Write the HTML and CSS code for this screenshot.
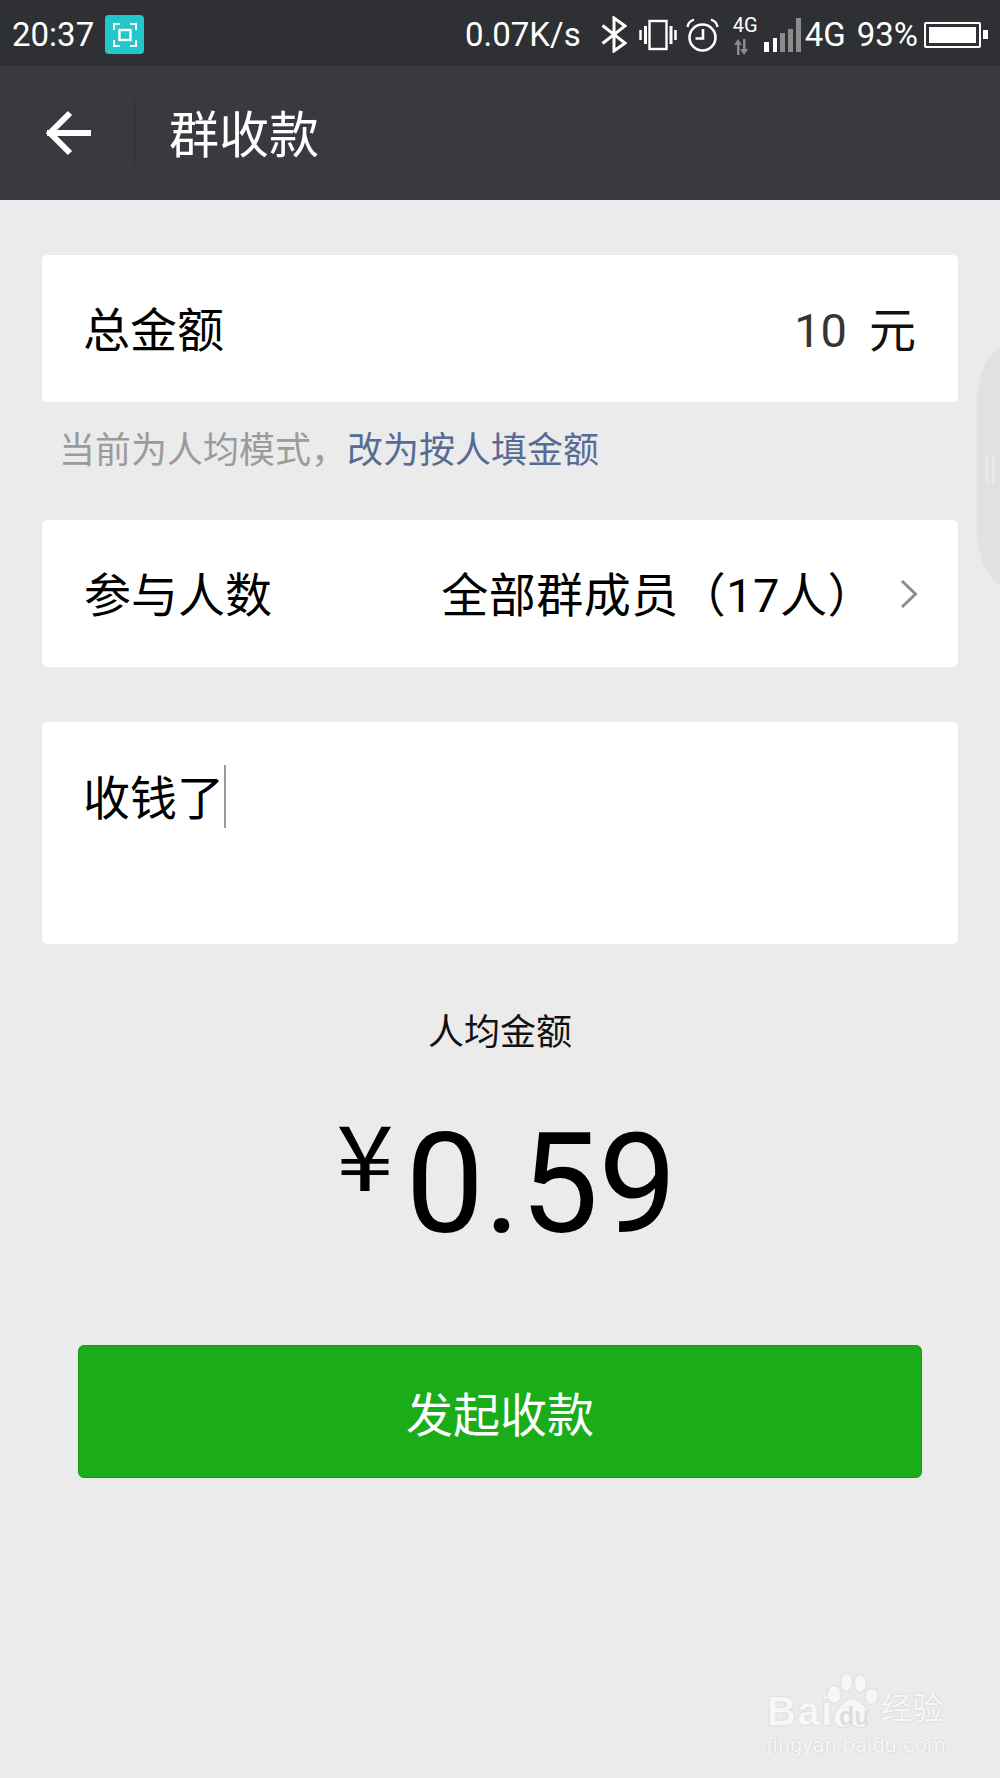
FILE: index.html
```html
<!DOCTYPE html>
<html lang="zh-CN">
<head>
  <meta charset="UTF-8">
  <meta name="viewport" content="width=device-width, initial-scale=1">
  <title>群收款</title>
  <link rel="stylesheet" href="styles.css">
</head>
<body>

  <!-- Status bar -->
  <div class="status-bar">
    <span class="time">20:37</span>
    <span class="app-badge">
      <svg width="26" height="26" viewBox="0 0 26 26" fill="none" stroke="#fff" stroke-width="2">
        <path d="M2 8V2H8M18 2H24V8M24 18V24H18M8 24H2V18"/>
        <rect x="7.5" y="8" width="11" height="10" stroke-width="2.4"/>
      </svg>
    </span>
    <span class="status-right">
      <span class="speed">0.07K/s</span>
      <svg class="ico-bt" width="26" height="37" viewBox="0 0 26 37" fill="none" stroke="#fff" stroke-width="3">
        <path d="M1.5 9.500L24 27L13 35V2L24 10L1.500 27.500"/>
      </svg>
      <svg class="ico-vib" width="38" height="32" viewBox="0 0 38 32" fill="none" stroke="#fff" stroke-width="2.400">
        <rect x="10.500" y="2" width="17" height="28"/>
        <path d="M6.500 7V25M32 7V25" stroke-width="3"/>
        <path d="M1.500 11V21M36.500 11V21" stroke-width="2.500"/>
      </svg>
      <svg class="ico-alarm" width="33" height="34" viewBox="0 0 33 34" fill="none" stroke="#fff" stroke-width="2.600">
        <circle cx="16.500" cy="19.500" r="13"/>
        <path d="M17 11V20.500H9.500"/>
        <path d="M1.500 9C2 5 4 3 8 1.500M31.500 9C31 5 29 3 25 1.500" stroke-width="2.400"/>
      </svg>
      <span class="net-type">
        <span class="net-small">4G</span>
        <svg width="16" height="16" viewBox="0 0 16 16" fill="#8a8b8d">
          <path d="M5 0L9 6H6.500V16H4V6H1ZM11 16L15 10H12.500V0H10V10H7Z" />
        </svg>
      </span>
      <svg class="ico-signal" width="37" height="34" viewBox="0 0 37 34">
        <rect x="0" y="24" width="5" height="10" fill="#fff"/>
        <rect x="9" y="20" width="4" height="14" fill="#fff"/>
        <rect x="16" y="15" width="5" height="19" fill="#8a8b8d"/>
        <rect x="24" y="11" width="5" height="23" fill="#8a8b8d"/>
        <rect x="32" y="0" width="5" height="34" fill="#8a8b8d"/>
      </svg>
      <span class="net-main">4G</span>
      <span class="battery-text">93%</span>
      <span class="battery"><span class="battery-fill"></span></span>
    </span>
  </div>

  <!-- Toolbar -->
  <div class="toolbar">
    <svg class="back" width="46" height="46" viewBox="0 0 46 46" fill="none" stroke="#fff" stroke-width="6">
      <path d="M2 23H46M25 3L5 23L25 43"/>
    </svg>
    <div class="toolbar-line"></div>
    <div class="toolbar-title">群收款</div>
  </div>

  <div class="content">
    <div class="card row">
      <span>总金额</span>
      <span class="value"><span class="num">10</span>元</span>
    </div>
    <p class="hint">当前为人均模式，<a class="hint-link">改为按人填金额</a></p>

    <div class="card row row-people">
      <span>参与人数</span>
      <span class="people">全部群成员（17人）</span>
      <svg class="chevron" width="18" height="30" viewBox="0 0 18 30" fill="none" stroke="#8c8c8c" stroke-width="3">
        <path d="M2 2L15.500 15L2 28"/>
      </svg>
    </div>

    <div class="card note">
      <span>收钱了</span><span class="caret"></span>
    </div>

    <div class="avg-label">人均金额</div>
    <div class="avg-amount"><span class="yen">¥</span><span class="avg-num">0.59</span></div>

    <button class="submit">发起收款</button>
  </div>

  <!-- Floating handle on the right edge -->
  <div class="side-handle"><span></span></div>

  <!-- Watermark -->
  <div class="watermark">
    <div class="wm-top">
      <span class="wm-bai">Bai</span>
      <svg class="wm-paw" width="52" height="56" viewBox="0 0 54 60" fill="#f7f7f7">
        <ellipse cx="8" cy="22" rx="7" ry="9"/>
        <ellipse cx="21" cy="9" rx="6" ry="9"/>
        <ellipse cx="36" cy="10" rx="6" ry="9"/>
        <ellipse cx="48" cy="24" rx="6.500" ry="8"/>
        <path d="M27 27C36 27 50 44 45 52C40 60 32 55 27 55C21 55 13 60 9 52C5 44 18 27 27 27Z"/>
      </svg>
      <span class="wm-du">du</span>
      <span class="wm-jy">经验</span>
    </div>
    <div class="wm-url">jingyan.baidu.com</div>
  </div>

</body>
</html>
```

FILE: styles.css
```css
* { margin: 0; padding: 0; box-sizing: border-box; }

body {
  width: 1000px;
  height: 1778px;
  position: relative;
  overflow: hidden;
  font-family: 'Roboto', 'Noto Sans CJK SC', sans-serif;
  background-color: #ebebeb;
  color: #000;
}

.status-bar {
  height: 66px;
  padding: 3px 0 0 12px;
  display: flex;
  align-items: center;
  background-color: #2f3034;
  color: #fff;
  font-size: 33px;
}

.app-badge {
  width: 39px;
  height: 39px;
  margin-left: 11px;
  border-radius: 4px;
  background-color: #22c7c9;
  display: flex;
  justify-content: center;
  align-items: center;
}

.status-right {
  margin-left: auto;
  padding-right: 19px;
  display: flex;
  align-items: center;
}

.ico-bt { margin-left: 20px; }
.ico-vib { margin-left: 12px; }
.ico-alarm { margin-left: 9px; }

.net-type {
  width: 24px;
  margin-left: 14px;
  display: flex;
  flex-direction: column;
  align-items: flex-start;
  line-height: 1;
}

.net-small {
  font-size: 20px;
  margin-bottom: 4px;
}

.ico-signal { margin-left: 7px; }
.net-main { margin-left: 4px; }
.battery-text { margin-left: 11px; }

.battery {
  width: 57px;
  height: 26px;
  margin-left: 6px;
  padding: 3px;
  position: relative;
  border: 2px solid #fff;
  border-radius: 2px;
}

.battery::after {
  content: "";
  position: absolute;
  right: -9px;
  top: 6px;
  width: 5px;
  height: 9px;
  background-color: #fff;
}

.battery-fill {
  display: block;
  width: 100%;
  height: 100%;
  background-color: #fff;
}

.toolbar {
  height: 134px;
  display: flex;
  align-items: center;
  background-color: #393a3f;
  color: #fff;
}

.back { margin-left: 45px; }

.toolbar-line {
  width: 1px;
  height: 66px;
  margin-left: 43px;
  background-color: #2d2e32;
}

.toolbar-title {
  margin: 0 0 4px 34px;
  font-size: 50px;
}

.content {
  padding: 55px 42px 0;
}

.card {
  background-color: #fff;
  border-radius: 5px;
}

.row {
  height: 147px;
  padding: 0 42px 4px 41px;
  display: flex;
  justify-content: space-between;
  align-items: center;
  font-size: 47px;
}

.row-people { padding-left: 42px; }

.value {
  color: #111;
}

.num {
  margin-right: 22px;
  color: #353535;
}

.hint {
  height: 118px;
  padding: 23px 17px 0;
  font-size: 36px;
  line-height: 52px;
  color: #9b9b9b;
}

.hint-link { color: #576b95; }

.people {
  margin-left: auto;
  letter-spacing: 0.5px;
}

.chevron {
  margin: 4px -2px 0 25px;
}

.note {
  height: 222px;
  margin-top: 55px;
  padding: 45px 41px 0;
  display: flex;
  align-items: flex-start;
  font-size: 47px;
  line-height: 64px;
}

.caret {
  width: 2px;
  height: 63px;
  margin-top: -2px;
  background-color: #9a9a9a;
}

.avg-label {
  margin-top: 63px;
  text-align: center;
  font-size: 36px;
  line-height: 52px;
  color: #111;
}

.avg-amount {
  height: 180px;
  margin-top: 35px;
  padding-left: 16px;
  display: flex;
  justify-content: center;
  align-items: flex-start;
  line-height: 180px;
}

.yen {
  font-family: 'Noto Sans CJK SC', sans-serif;
  font-size: 90px;
  line-height: 116px;
  margin-right: 16px;
  transform: scaleX(1.15);
}

.avg-num {
  font-size: 140px;
  letter-spacing: -0.500px;
}

.submit {
  display: block;
  width: 844px;
  height: 133px;
  margin: 71px 36px 0;
  background-color: #1aad19;
  border: 1px solid #179b16;
  border-radius: 6px;
  color: #fff;
  font-family: inherit;
  font-size: 47px;
}

/* over the page */
.side-handle {
  position: absolute;
  top: 346px;
  right: -36px;
  width: 60px;
  height: 240px;
  background-color: #e1e1e1;
  border: 1px solid #e6e6e6;
  border-radius: 30px / 60px;
}

.side-handle span {
  position: absolute;
  top: 108px;
  left: 9px;
  width: 8px;
  height: 28px;
  border-left: 2px solid #ebebeb;
  border-right: 2px solid #ebebeb;
}

.watermark {
  position: absolute;
  left: 767px;
  top: 1672px;
  color: #f7f7f7;
  text-shadow: 0 0 2px #c9c9c9;
}

.wm-top {
  height: 58px;
  position: relative;
  display: flex;
  align-items: flex-end;
  font-family: 'Liberation Sans', 'Noto Sans CJK SC', sans-serif;
  font-weight: bold;
}

.wm-bai {
  width: 59px;
  margin-bottom: -3px;
  font-size: 40px;
  line-height: 44px;
  letter-spacing: 1.500px;
}

.wm-paw {
  filter: drop-shadow(0 0 1px #c9c9c9);
}

.wm-du {
  position: absolute;
  left: 72px;
  top: 30px;
  font-size: 25px;
  line-height: 28px;
  color: #dedede;
  text-shadow: none;
}

.wm-jy {
  margin-left: 3px;
  font-size: 31px;
  line-height: 42px;
  font-weight: normal;
}

.wm-url {
  font-family: 'Roboto', sans-serif;
  font-size: 21px;
  line-height: 30px;
  letter-spacing: 0.500px;
}
```
